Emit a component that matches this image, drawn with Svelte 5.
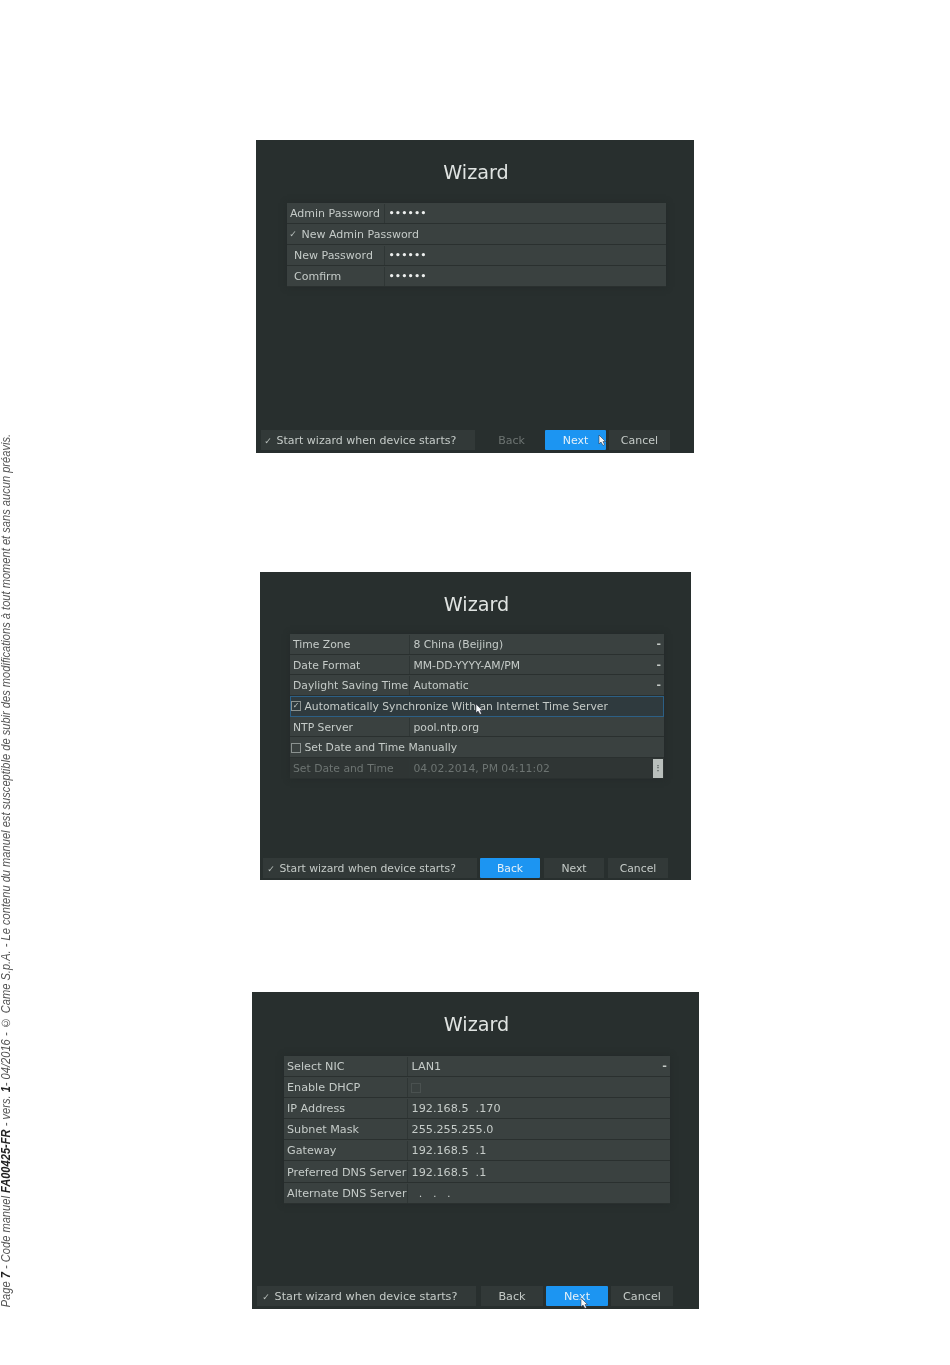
<script>
	const screens = [
		{
			id: 'account',
			back: 'off',
			next: 'on',
			cursor: 'c1',
			rows: [
				{ label: 'Admin Password', value: '••••••', dots: true },
				{ check: 'tick', label: 'New Admin Password' },
				{ label: 'New Password', value: '••••••', dots: true, indent: true },
				{ label: 'Comfirm', value: '••••••', dots: true, indent: true }
			]
		},
		{
			id: 'time',
			back: 'on',
			next: '',
			cursor: 'c2',
			rows: [
				{ label: 'Time Zone', value: '8 China (Beijing)', select: true },
				{ label: 'Date Format', value: 'MM-DD-YYYY-AM/PM', select: true },
				{ label: 'Daylight Saving Time', value: 'Automatic', select: true },
				{ check: 'box-on', label: 'Automatically Synchronize With an Internet Time Server', focus: true },
				{ label: 'NTP Server', value: 'pool.ntp.org' },
				{ check: 'box', label: 'Set Date and Time Manually' },
				{ label: 'Set Date and Time', value: '04.02.2014, PM 04:11:02', off: true, spin: true }
			]
		},
		{
			id: 'network',
			back: '',
			next: 'on',
			cursor: 'c3',
			rows: [
				{ label: 'Select NIC', value: 'LAN1', select: true },
				{ label: 'Enable DHCP', box: true },
				{ label: 'IP Address', value: '192.168.5  .170' },
				{ label: 'Subnet Mask', value: '255.255.255.0' },
				{ label: 'Gateway', value: '192.168.5  .1' },
				{ label: 'Preferred DNS Server', value: '192.168.5  .1' },
				{ label: 'Alternate DNS Server', value: '  .   .   .' }
			]
		}
	];
</script>

<div class="page">
	<p class="note">Page <b>7</b> - Code manuel <b>FA00425-FR</b> - vers. <b>1</b>- 04/2016 - © Came S.p.A. - Le contenu du manuel est susceptible de subir des modifications à tout moment et sans aucun préavis.</p>

	{#each screens as s}
		<section class="wizard {s.id}">
			<h1>Wizard</h1>
			<div class="table">
				{#each s.rows as r}
					<div class="row" class:focus={r.focus} class:off={r.off}>
						{#if r.check}
							<div class="wide">
								{#if r.check === 'tick'}
									<span class="tick">✓</span>
								{:else}
									<span class="box">{#if r.check === 'box-on'}✓{/if}</span>
								{/if}
								{r.label}
							</div>
						{:else}
							<div class="label" class:indent={r.indent}>{r.label}</div>
							<div class="value" class:dots={r.dots}>
								{#if r.box}<span class="box dim"></span>{/if}
								{r.value ?? ''}
								{#if r.select}<span class="drop">-</span>{/if}
								{#if r.spin}<span class="spin">⁝</span>{/if}
							</div>
						{/if}
					</div>
				{/each}
			</div>
			<div class="footer">
				<div class="start"><span class="tick">✓</span> Start wizard when device starts?</div>
				<div class="btn {s.back}">Back</div>
				<div class="btn {s.next}">Next</div>
				<div class="btn">Cancel</div>
			</div>
			<svg class="cursor {s.cursor}" viewBox="0 0 8 11" width="8" height="11">
				<path d="M1 0 L1 9 L3 7 L5 10.500 L6.500 9.500 L5 6.500 L7.500 6.500 Z" fill="#f4f6f8" stroke="#223" stroke-width="0.5" />
			</svg>
		</section>
	{/each}
</div>

<style>
	:global(body) {
		background: #fff;
	}

	.page {
		position: relative;
		height: 1365px;
		padding-top: 140px;
		box-sizing: border-box;
		overflow: hidden;
	}

	.note {
		position: absolute;
		left: 0;
		bottom: 23px;
		margin: 0;
		writing-mode: vertical-rl;
		transform: rotate(180deg) scaleY(0.926);
		white-space: nowrap;
		font: italic 12px/13px "Liberation Sans", sans-serif;
		color: #555;
	}

	.note b {
		color: #222;
	}

	.wizard {
		position: relative;
		display: flex;
		flex-direction: column;
		background: #282f2e;
		color: #c5cbc8;
		font-family: "DejaVu Sans", sans-serif;
		font-size: var(--text);
		filter: blur(0.6px);
		box-sizing: border-box;
	}

	.account {
		width: 438px;
		height: 313px;
		margin-left: 256px;
		--text: 11px;
		--table-x: 31px;
		--table-w: 379px;
		--table-top: 16px;
		--row-h: 20.9px;
		--label-w: 98px;
		--value-x: 0px;
		--foot-x: 5px;
		--start-w: 214px;
		--start-pad: 1px;
		--start-gap: 3px;
		--foot-gap: 3px;
		--btn-w: 61px;
		--foot-b: 3px;
	}

	.time {
		width: 431px;
		height: 308px;
		margin: 119px 0 0 260px;
		--text: 10.8px;
		--table-x: 30px;
		--table-w: 374px;
		--table-top: 15px;
		--row-h: 20.7px;
		--label-w: 120px;
		--value-x: 0px;
		--foot-x: 3px;
		--start-w: 214px;
		--start-pad: 2px;
		--start-gap: -1px;
		--foot-gap: 4px;
		--btn-w: 60px;
		--foot-b: 2px;
	}

	.network {
		width: 447px;
		height: 317px;
		margin: 112px 0 0 252px;
		--text: 11.2px;
		--table-x: 32px;
		--table-w: 386px;
		--table-top: 17px;
		--row-h: 21.1px;
		--label-w: 124px;
		--value-x: 0px;
		--foot-x: 5px;
		--start-w: 219px;
		--start-pad: 3px;
		--start-gap: 2px;
		--foot-gap: 3px;
		--btn-w: 62px;
		--foot-b: 3px;
	}

	h1 {
		margin: 19px 0 0;
		padding-left: 2px;
		height: 28px;
		text-align: center;
		font-size: 19.2px;
		line-height: 28px;
		font-weight: 400;
		color: #e0e4e2;
	}

	.table {
		display: flex;
		flex-direction: column;
		width: var(--table-w);
		margin: var(--table-top) 0 0 var(--table-x);
		box-shadow: 0 0 6px #20262588;
	}

	.row {
		display: flex;
		align-items: center;
		height: var(--row-h);
		padding-top: 1px;
		background: #3a4140;
		border-bottom: 1px solid #2a302f;
		box-sizing: border-box;
		white-space: pre;
	}

	.row.focus {
		background: #2f3a3e;
		outline: 1px solid #2c5f85;
		outline-offset: -1px;
	}

	.row.off {
		background: #2f3534;
		color: #6d7472;
	}

	.label {
		display: flex;
		align-items: center;
		align-self: stretch;
		width: var(--label-w);
		padding-left: 3px;
		box-sizing: border-box;
		border-right: 1px solid #2f3635;
		flex-shrink: 0;
	}

	.label.indent {
		padding-left: 7px;
	}

	.value {
		position: relative;
		flex: 1;
		display: flex;
		align-items: center;
		align-self: stretch;
		padding-left: var(--value-x);
	}

	.value.dots {
		letter-spacing: 0.6px;
		font-size: 9px;
		color: #eef0ef;
		font-weight: 700;
	}

	.wide {
		display: flex;
		align-items: center;
	}

	.tick {
		display: inline-block;
		width: 10px;
		margin-left: 1px;
		font-size: 9px;
		text-align: center;
		color: #b9c0bd;
	}

	.box {
		display: inline-block;
		width: 8px;
		height: 8px;
		margin-left: 1px;
		border: 1px solid #8b9290;
		font-size: 8px;
		line-height: 8px;
		text-align: center;
	}

	.box.dim {
		border-color: #4a5150;
		margin-left: 3px;
	}

	.drop {
		position: absolute;
		right: 3px;
		top: 2px;
		font-weight: 700;
	}

	.spin {
		position: absolute;
		right: 1px;
		top: 0;
		width: 10px;
		height: 19px;
		background: #b9bfbc;
		color: #4b5250;
		font-size: 11px;
		line-height: 19px;
		text-align: center;
	}

	.footer {
		display: flex;
		gap: var(--foot-gap);
		margin: auto 0 var(--foot-b) var(--foot-x);
		height: 20px;
		line-height: 21px;
	}

	.start {
		width: var(--start-w);
		padding-left: var(--start-pad);
		margin-right: var(--start-gap);
		box-sizing: border-box;
		background: #323938;
		white-space: nowrap;
	}

	.btn {
		width: var(--btn-w);
		background: #323938;
		text-align: center;
	}

	.btn.on {
		background: #1c95f2;
		color: #e4f0f8;
		border-radius: 1px;
	}

	.btn.off {
		background: transparent;
		color: #6d7472;
	}

	.cursor {
		position: absolute;
	}

	.c1 {
		left: 342px;
		top: 295px;
	}

	.c2 {
		left: 215px;
		top: 132px;
	}

	.c3 {
		left: 328px;
		top: 306px;
	}
</style>
